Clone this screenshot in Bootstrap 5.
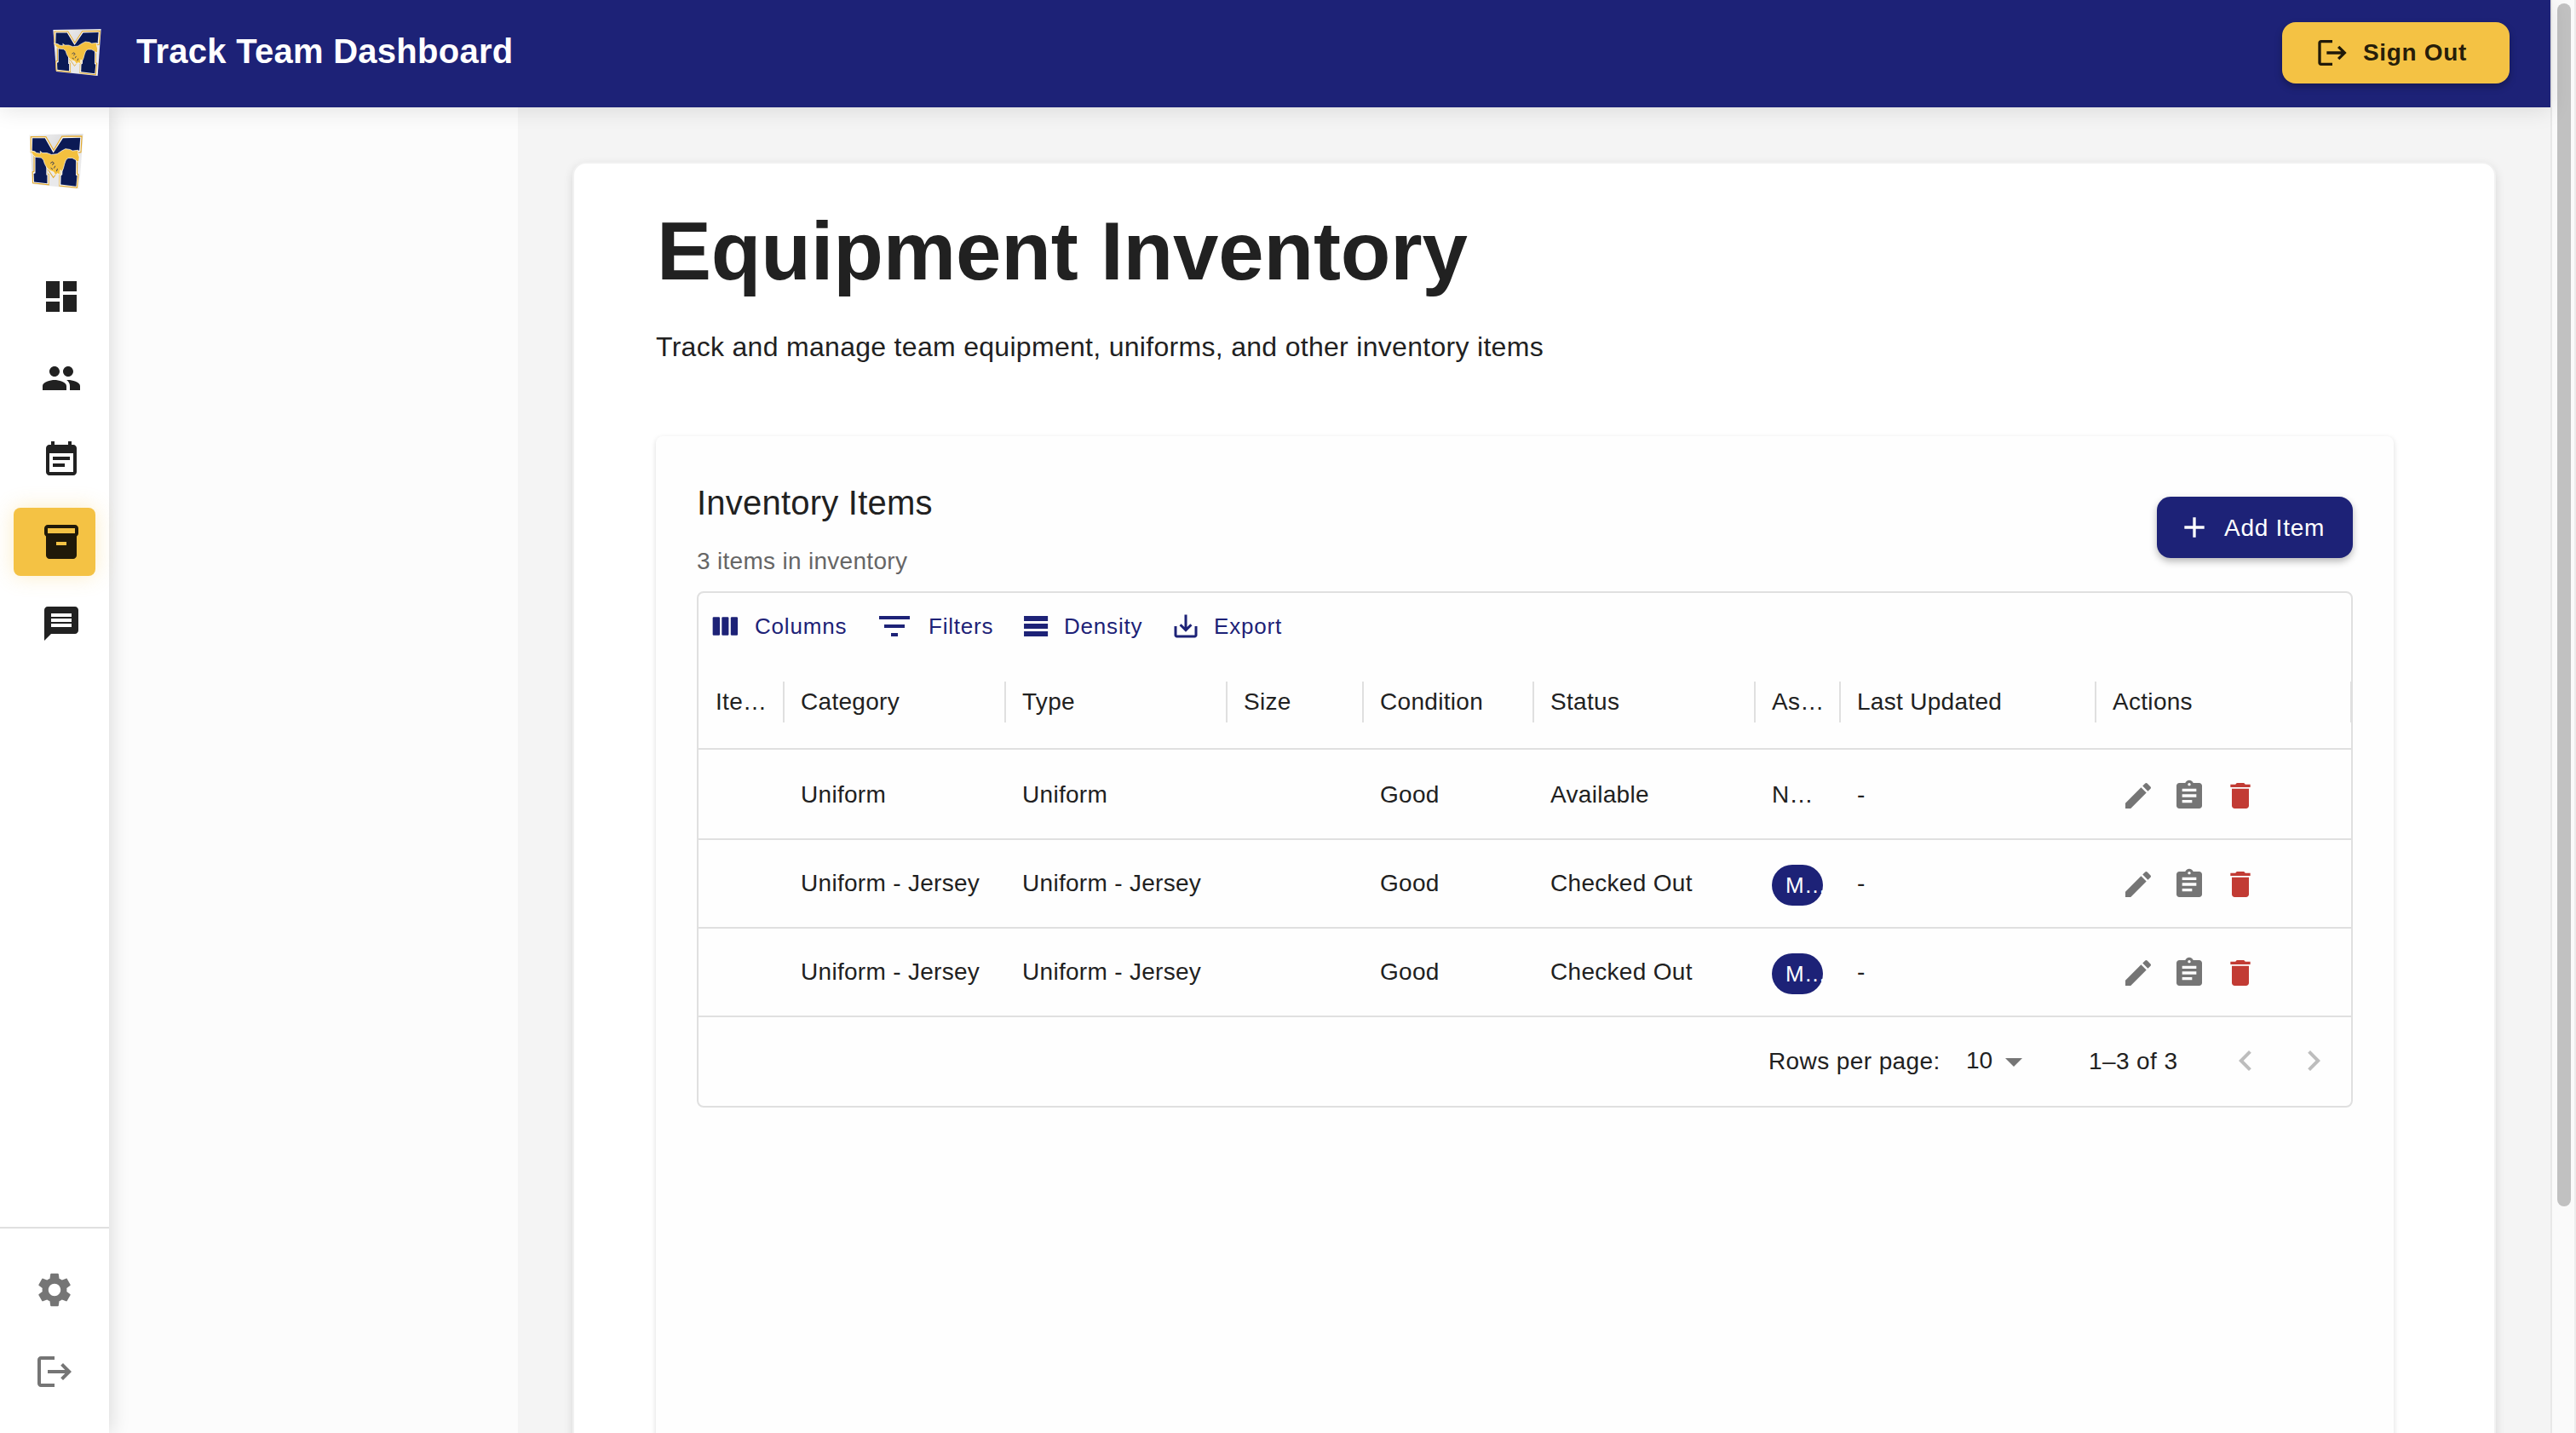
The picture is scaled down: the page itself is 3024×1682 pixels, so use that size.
<!DOCTYPE html>
<html lang="en">
<head>
<meta charset="utf-8">
<title>Track Team Dashboard</title>
<link href="https://cdn.jsdelivr.net/npm/bootstrap@5.3.0/dist/css/bootstrap.min.css" rel="stylesheet">
<style>
  :root { --navy: #1d2277; --gold: #f4c244; --ink: #212121; --muted: #757575; --line: #e0e0e0; }
  body { font-family: "Liberation Sans", Arial, sans-serif; font-size: 28px; letter-spacing: .3px; color: var(--ink); background: #f4f4f4; height: 100vh; overflow: hidden; line-height: 40px; }
  svg { fill: currentColor; display: block; flex: none; }
  .ic48 { width: 48px; height: 48px; }
  .ic40 { width: 40px; height: 40px; }
  .ic36 { width: 36px; height: 36px; }

  .topbar { height: 126px; background: var(--navy); padding: 0 48px 0 62px; box-shadow: 0 4px 24px rgba(0,0,0,.1); z-index: 3; flex: none; }
  .topbar h1 { font-size: 40px; font-weight: 700; letter-spacing: .26px; line-height: 48px; margin: 0 0 7px 41px; color: #fff; }
  .logo-top { width: 57px; height: 55px; margin-bottom: 4px; }
  .btn-app { height: 72px; border: 0; border-radius: 16px; font-size: 28px; line-height: 40px; letter-spacing: .75px; padding: 0; display: flex; align-items: center; }
  .btn-signout { width: 267px; margin-bottom: 2px; background: var(--gold); color: rgba(0,0,0,.87); font-weight: 700; letter-spacing: .67px; padding-left: 39px; box-shadow: 0 4px 8px rgba(0,0,0,.28); }
  .btn-signout span { margin-left: 16px; }
  .btn-add { width: 230px; background: var(--navy); color: #fff; padding-left: 24px; box-shadow: 0 4px 8px rgba(0,0,0,.28); }
  .btn-add span { margin: 1px 0 0 15px; }

  .rail { width: 128px; background: #fff; box-shadow: 4px 0 20px rgba(0,0,0,.12); z-index: 2; flex: none; }
  .logo-rail { width: 64px; height: 65px; margin: 31px 0 0 34px; }
  .rail-nav { margin-top: 86px; padding: 0 16px; gap: 16px; }
  .rail-nav .nav-link { height: 80px; padding: 0 0 0 32px; border-radius: 8px; color: var(--ink); display: flex; align-items: center; }
  .rail-nav .nav-link.active { background: var(--gold); color: rgba(0,0,0,.87); box-shadow: 0 0 24px rgba(244,194,68,.3); }
  .rail-foot { border-top: 2px solid var(--line); height: 242px; padding: 48px 0 0 40px; gap: 48px; color: var(--muted); }
  .drawer-space { width: 480px; background: #fcfcfc; flex: none; }

  .page { padding: 64px 64px 0; }
  .panel { background: #fff; border: 2px solid #f1f1f1; border-radius: 16px; padding: 47px 118px 0 96px; height: 1700px; box-shadow: 0 4px 12px rgba(0,0,0,.12); }
  .panel h2 { font-size: 96px; line-height: 112px; font-weight: 700; letter-spacing: -.16px; margin: 0 0 32px 1px; }
  .subtitle { font-size: 32px; line-height: 48px; letter-spacing: .3px; margin: 0 0 81px; }
  .box { background: #fefefe; border-radius: 8px; padding: 47px 48px 0; height: 1400px; box-shadow: 0 2px 6px rgba(0,0,0,.14); }
  .box-head { height: 120px; margin-bottom: 15px; }
  .box-head h3 { font-size: 40px; line-height: 64px; font-weight: 400; letter-spacing: .22px; margin: -1px 0 17px; }
  .box-head p { color: #666; letter-spacing: .3px; margin: 0; }

  .datagrid { border: 2px solid var(--line); border-radius: 8px; height: 606px; }
  .tools { height: 72px; padding: 6px 0 0 12px; color: var(--navy); }
  .tools button { border: 0; background: none; color: inherit; font-size: 26px; letter-spacing: .8px; padding: 0; text-align: left; line-height: 38px; }
  .tools button:nth-child(1) { width: 194px; gap: 18px; }
  .tools button:nth-child(2) { width: 172px; gap: 16px; }
  .tools button:nth-child(3) { width: 176px; gap: 15px; }
  .tools button:nth-child(4) { gap: 15px; }
  .inv { table-layout: fixed; width: 1940px; margin: 0; color: inherit; border-collapse: separate; border-spacing: 0; }
  .inv th, .inv td { height: 104px; padding: 2px 19px 0 20px; border: 0; font-weight: 400; vertical-align: middle; white-space: nowrap; overflow: hidden; background: none; color: inherit; line-height: 40px; }
  .inv tr + tr td { box-shadow: inset 0 2px 0 var(--line); }
  .inv th { height: 112px; padding-top: 0; box-shadow: inset 0 -2px 0 var(--line);
    background: linear-gradient(var(--line), var(--line)) right 32px / 1px 48px no-repeat, linear-gradient(var(--line), var(--line)) left 32px / 1px 48px no-repeat; }
  .inv th:first-child { background: linear-gradient(var(--line), var(--line)) right 32px / 1px 48px no-repeat; }
  .inv .pill { display: block; width: 60px; height: 48px; border-radius: 24px; background: var(--navy); color: #fff; font-size: 26px; line-height: 48px; padding-left: 16px; margin-top: 4px; }
  .acts { gap: 20px; padding: 2px 0 0 10px; color: var(--muted); }
  .acts .del { color: #c23b34; }
  .pager { height: 106px; box-shadow: inset 0 2px 0 var(--line); padding: 2px 20px 0 0; }
  .pager .lbl { width: 232px; letter-spacing: .4px; }
  .pager .num { width: 32px; margin-top: -2px; letter-spacing: 0; }
  .pager .range { width: 160px; margin-left: 64px; letter-spacing: .4px; }
  .pager .caret { color: var(--muted); }
  .pager .arr { color: #bdbdbd; margin-top: -3px; }
  .pager .arr + .arr { margin-left: 32px; }

  .scroller { width: 30px; background: #fafafa; border-left: 2px solid #e8e8e8; border-right: 2px solid #ececec; padding: 4px 4px 0 6px; flex: none; }
  .thumb { width: 16px; height: 1412px; border-radius: 8px; background: #c1c1c1; }
  .min-h-0 { min-height: 0; }
</style>
</head>
<body class="d-flex">
<svg width="0" height="0" class="position-absolute">
  <defs>
    <linearGradient id="sheet" x1="0" y1="0" x2="1" y2="1"><stop offset="0" stop-color="#f4f4f4"/><stop offset=".4" stop-color="#dcdcde"/><stop offset="1" stop-color="#f6f6f6"/></linearGradient>
    <symbol id="crest" viewBox="30 30 170 162" preserveAspectRatio="none">
      <path fill="url(#sheet)" d="M31 33 199 30 187 192 42 177z"/>
      <path fill="#f8f8f8" stroke="#e3a92c" stroke-width="3" d="M36 39H83L107 78 133 38 195 37 192 84 181 85 180 147 184 149 180 188 124 182 125 149 128 148V130H89V147H92V179L42 174 41 142 46 140 46 86 36 84z"/>
      <path fill="#0b1a55" d="M41 43H80L106 86 136 43 190 42 187 79 177 81 176 151 180 153 177 184 129 178 130 152 134 150 136 112H84V151H87V175L46 171 45 147 50 145 50 82 40 80z"/>
      <path fill="#e9e9eb" d="M88 124H128V147L124 149V183L93 179V147L88 146z"/>
      <path fill="none" stroke="#e3a92c" stroke-width="2.500" d="M89 134 106 158 127 134"/>
      <path fill="#f3c03f" stroke="#fff" stroke-width="1.800" d="M35 79 46 82 54 86 66 88 65 81 72 86 86 86 100 91 118 89 132 80 144 74 158 76 166 80 184 78 183 86 187 98 186 109 181 113 175 106 165 101 152 101 145 107 141 118 137 132 133 140 128 136 126 150 119 146 112 151 107 142 96 138 86 130 79 118 75 106 68 100 50 98 42 92z"/>
      <path fill="none" stroke="#0b1a55" stroke-width="2" d="M97 116 104 112 108 117 102 121M112 124 108 131M119 132 116 140M98 130 104 134"/>
    </symbol>
    <symbol id="i-exit" viewBox="0 0 24 24"><path d="m17 7-1.410 1.410L18.170 11H8v2h10.170l-2.580 2.580L17 17l5-5zM4 5h8V3H4c-1.100 0-2 .9-2 2v14c0 1.100.9 2 2 2h8v-2H4z"/></symbol>
    <symbol id="i-edit" viewBox="0 0 24 24"><path d="M3 17.250V21h3.750L17.810 9.940l-3.750-3.750zM20.710 7.040c.39-.39.39-1.020 0-1.410l-2.340-2.340a.996.996 0 0 0-1.410 0l-1.830 1.830 3.750 3.750z"/></symbol>
    <symbol id="i-task" viewBox="0 0 24 24"><path d="M19 3h-4.180C14.400 1.840 13.300 1 12 1s-2.400.84-2.820 2H5c-1.100 0-2 .9-2 2v14c0 1.100.9 2 2 2h14c1.100 0 2-.9 2-2V5c0-1.100-.9-2-2-2m-7 0c.55 0 1 .45 1 1s-.45 1-1 1-1-.45-1-1 .45-1 1-1m2 14H7v-2h7zm3-4H7v-2h10zm0-4H7V7h10z"/></symbol>
    <symbol id="i-del" viewBox="0 0 24 24"><path d="M6 19c0 1.100.9 2 2 2h8c1.100 0 2-.9 2-2V7H6zM19 4h-3.500l-1-1h-5l-1 1H5v2h14z"/></symbol>
  </defs>
</svg>

<div class="d-flex flex-column flex-grow-1 vh-100">
  <header class="topbar d-flex align-items-center position-relative">
    <svg class="logo-top"><use href="#crest"/></svg>
    <h1>Track Team Dashboard</h1>
    <button class="btn btn-app btn-signout ms-auto"><svg class="ic40"><use href="#i-exit"/></svg><span>Sign Out</span></button>
  </header>

  <div class="d-flex flex-grow-1 min-h-0">
    <aside class="rail d-flex flex-column position-relative">
      <svg class="logo-rail"><use href="#crest"/></svg>
      <nav class="rail-nav nav flex-column">
        <a class="nav-link"><svg class="ic48" viewBox="0 0 24 24"><path d="M3 13h8V3H3zm0 8h8v-6H3zm10 0h8V11h-8zm0-18v6h8V3z"/></svg></a>
        <a class="nav-link"><svg class="ic48" viewBox="0 0 24 24"><path d="M16 11c1.660 0 2.990-1.340 2.990-3S17.660 5 16 5s-3 1.340-3 3 1.340 3 3 3m-8 0c1.660 0 2.990-1.340 2.990-3S9.660 5 8 5 5 6.340 5 8s1.340 3 3 3m0 2c-2.330 0-7 1.170-7 3.500V19h14v-2.500c0-2.330-4.670-3.500-7-3.500m8 0c-.29 0-.62.02-.97.05 1.160.84 1.970 1.970 1.970 3.450V19h6v-2.500c0-2.330-4.670-3.500-7-3.500"/></svg></a>
        <a class="nav-link"><svg class="ic48" viewBox="0 0 24 24"><path d="M17 10H7v2h10zm2-7h-1V1h-2v2H8V1H6v2H5c-1.110 0-1.990.9-1.990 2L3 19c0 1.100.89 2 2 2h14c1.100 0 2-.9 2-2V5c0-1.100-.9-2-2-2m0 16H5V8h14zm-5-5H7v2h7z"/></svg></a>
        <a class="nav-link active"><svg class="ic48" viewBox="0 0 24 24"><path d="M20 2H4c-1 0-2 .9-2 2v3.010c0 .72.43 1.340 1 1.690V20c0 1.100 1.100 2 2 2h14c.9 0 2-.9 2-2V8.700c.57-.35 1-.97 1-1.690V4c0-1.100-1-2-2-2m-5 12H9v-2h6zm5-7H4V4h16z"/></svg></a>
        <a class="nav-link"><svg class="ic48" viewBox="0 0 24 24"><path d="M20 2H4c-1.100 0-1.990.9-1.990 2L2 22l4-4h14c1.100 0 2-.9 2-2V4c0-1.100-.9-2-2-2m-2 12H6v-2h12zm0-3H6V9h12zm0-3H6V6h12z"/></svg></a>
      </nav>
      <div class="rail-foot mt-auto d-flex flex-column">
        <svg class="ic48" viewBox="0 0 24 24"><path d="M19.140 12.940c.04-.3.06-.61.06-.94 0-.32-.02-.64-.07-.94l2.030-1.580c.18-.14.23-.41.12-.61l-1.920-3.320c-.12-.22-.37-.29-.59-.22l-2.390.96c-.5-.38-1.030-.7-1.620-.94l-.36-2.540c-.04-.24-.24-.41-.48-.41h-3.840c-.24 0-.43.17-.47.41l-.36 2.540c-.59.24-1.130.57-1.620.94l-2.390-.96c-.22-.08-.47 0-.59.22L2.740 8.870c-.12.21-.08.47.12.61l2.030 1.580c-.05.3-.09.63-.09.94s.02.64.07.94l-2.030 1.580c-.18.14-.23.41-.12.61l1.920 3.320c.12.22.37.29.59.22l2.390-.96c.5.38 1.030.7 1.620.94l.36 2.540c.05.24.24.41.48.41h3.840c.24 0 .44-.17.47-.41l.36-2.540c.59-.24 1.130-.56 1.620-.94l2.390.96c.22.08.47 0 .59-.22l1.920-3.320c.12-.22.07-.47-.12-.61zM12 15.600c-1.980 0-3.600-1.620-3.600-3.600s1.620-3.600 3.600-3.600 3.600 1.620 3.600 3.600-1.620 3.600-3.600 3.600"/></svg>
        <svg class="ic48"><use href="#i-exit"/></svg>
      </div>
    </aside>
    <div class="drawer-space"></div>

    <main class="page flex-grow-1 overflow-hidden">
      <section class="panel">
        <h2>Equipment Inventory</h2>
        <p class="subtitle">Track and manage team equipment, uniforms, and other inventory items</p>
        <div class="box">
          <div class="box-head d-flex justify-content-between align-items-center">
            <div><h3>Inventory Items</h3><p>3 items in inventory</p></div>
            <button class="btn btn-app btn-add"><svg class="ic40" viewBox="0 0 24 24"><path d="M19 13h-6v6h-2v-6H5v-2h6V5h2v6h6z"/></svg><span>Add Item</span></button>
          </div>
          <div class="datagrid">
            <div class="tools d-flex align-items-center">
              <button class="d-flex align-items-center"><svg class="ic36" viewBox="0 0 24 24"><rect x="3.100" y="4.900" width="5.600" height="14.200" rx=".8"/><rect x="10.200" y="4.900" width="5.400" height="14.200" rx=".8"/><rect x="17.200" y="4.900" width="5.500" height="14.200" rx=".8"/></svg><span>Columns</span></button>
              <button class="d-flex align-items-center"><svg class="ic48" viewBox="0 0 24 24"><path d="M10 18h4v-2h-4zM3 6v2h18V6zm3 7h12v-2H6z"/></svg><span>Filters</span></button>
              <button class="d-flex align-items-center"><svg class="ic36" viewBox="0 0 24 24"><path d="M21.400 8H2.700V4h18.700zm0 2H2.700v4h18.700zm0 6H2.700v4h18.700z"/></svg><span>Density</span></button>
              <button class="d-flex align-items-center"><svg class="ic36" viewBox="0 0 24 24"><path d="M19 12v7H5v-7H3v7c0 1.100.9 2 2 2h14c1.100 0 2-.9 2-2v-7zm-6 .67 2.590-2.580L17 11.500l-5 5-5-5 1.410-1.410L11 12.670V3h2z"/></svg><span>Export</span></button>
            </div>
            <table class="table inv">
              <colgroup><col style="width:100px"><col style="width:260px"><col style="width:260px"><col style="width:160px"><col style="width:200px"><col style="width:260px"><col style="width:100px"><col style="width:300px"><col style="width:300px"></colgroup>
              <thead><tr><th>Ite…</th><th>Category</th><th>Type</th><th>Size</th><th>Condition</th><th>Status</th><th>As…</th><th>Last Updated</th><th>Actions</th></tr></thead>
              <tbody>
                <tr><td></td><td>Uniform</td><td>Uniform</td><td></td><td>Good</td><td>Available</td><td>N…</td><td>-</td>
                  <td><div class="acts d-flex"><svg class="ic40"><use href="#i-edit"/></svg><svg class="ic40"><use href="#i-task"/></svg><svg class="ic40 del"><use href="#i-del"/></svg></div></td></tr>
                <tr><td></td><td>Uniform - Jersey</td><td>Uniform - Jersey</td><td></td><td>Good</td><td>Checked Out</td><td><span class="pill">M…</span></td><td>-</td>
                  <td><div class="acts d-flex"><svg class="ic40"><use href="#i-edit"/></svg><svg class="ic40"><use href="#i-task"/></svg><svg class="ic40 del"><use href="#i-del"/></svg></div></td></tr>
                <tr><td></td><td>Uniform - Jersey</td><td>Uniform - Jersey</td><td></td><td>Good</td><td>Checked Out</td><td><span class="pill">M…</span></td><td>-</td>
                  <td><div class="acts d-flex"><svg class="ic40"><use href="#i-edit"/></svg><svg class="ic40"><use href="#i-task"/></svg><svg class="ic40 del"><use href="#i-del"/></svg></div></td></tr>
              </tbody>
            </table>
            <div class="pager d-flex align-items-center justify-content-end">
              <span class="lbl">Rows per page:</span><span class="num">10</span>
              <svg class="ic48 caret" viewBox="0 0 24 24"><path d="m7 10 5 5 5-5z"/></svg>
              <span class="range">1–3 of 3</span>
              <svg class="ic48 arr" viewBox="0 0 24 24"><path d="M15.410 7.410 14 6l-6 6 6 6 1.410-1.410L10.830 12z"/></svg>
              <svg class="ic48 arr" viewBox="0 0 24 24"><path d="M10 6 8.590 7.410 13.170 12l-4.580 4.590L10 18l6-6z"/></svg>
            </div>
          </div>
        </div>
      </section>
    </main>
  </div>
</div>
<div class="scroller"><div class="thumb"></div></div>
<script src="https://cdn.jsdelivr.net/npm/bootstrap@5.3.0/dist/js/bootstrap.bundle.min.js"></script>
</body>
</html>
